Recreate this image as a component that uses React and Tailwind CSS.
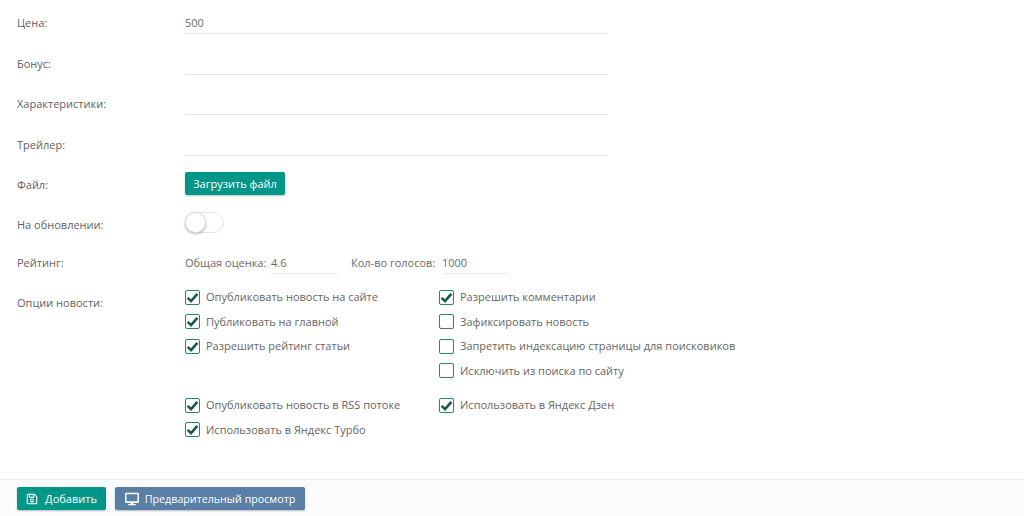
import React from 'react';
import { FaRegSave, FaDesktop } from 'react-icons/fa';

const Row = ({ label, className = '', labelClass = '', children }) => (
  <div className={`flex ${className}`}>
    <div className={`w-[168px] shrink-0 text-[#5f5f5f] ${labelClass}`}>{label}</div>
    <div className="flex-1">{children}</div>
  </div>
);

const Line = ({ value }) => (
  <div className="w-[423px] h-[21px] border-b border-[#e3e6e8] text-[#6b6b6b] leading-[19px]">{value}</div>
);

const Box = ({ label, checked }) => (
  <div className="flex items-center h-[24.5px]">
    <span className="w-[15px] h-[15px] rounded-[2px] border-[1.5px] border-[#2c8074] flex items-center justify-center shrink-0">
      {checked && (
        <svg viewBox="0 0 16 16" className="w-[13px] h-[13px]">
          <path d="M2 8.5 6.2 12.5 14 3.5" fill="none" stroke="#175a50" strokeWidth="3.2" />
        </svg>
      )}
    </span>
    <span className="ml-[6px] text-[#666] whitespace-nowrap">{label}</span>
  </div>
);

const col1a = [['Опубликовать новость на сайте', true], ['Публиковать на главной', true], ['Разрешить рейтинг статьи', true]];
const col2a = [['Разрешить комментарии', true], ['Зафиксировать новость', false], ['Запретить индексацию страницы для поисковиков', false], ['Исключить из поиска по сайту', false]];
const col1b = [['Опубликовать новость в RSS потоке', true], ['Использовать в Яндекс Турбо', true]];
const col2b = [['Использовать в Яндекс Дзен', true]];

const App = () => {
  return (
    <div className="w-[1024px] h-[516px] bg-white flex flex-col overflow-hidden font-['Open_Sans',sans-serif] text-[11px] leading-[20px]">
      <div className="flex-1 pl-[17px] pt-[13px]">
        <Row label="Цена:"><Line value="500" /></Row>
        <Row label="Бонус:" className="mt-[19.5px]"><Line /></Row>
        <Row label="Характеристики:" className="mt-[19.5px]"><Line /></Row>
        <Row label="Трейлер:" className="mt-[19.5px]"><Line /></Row>
        <Row label="Файл:" className="mt-[16.5px] items-center" labelClass="pt-[2px]">
          <button className="h-[23px] w-[100px] bg-[#009688] text-white rounded-[2px] shadow-[0_1px_2px_rgba(0,0,0,0.25)]">Загрузить файл</button>
        </Row>
        <Row label="На обновлении:" className="mt-[17px]" labelClass="h-[21px] pt-[3px]">
          <div className="relative w-[39px] h-[21px] rounded-full border border-[#e6e6e6] bg-white">
            <span className="absolute left-[-1px] top-[-1px] w-[21px] h-[21px] rounded-full bg-white border border-[#ddd] shadow-[0_1px_3px_rgba(0,0,0,0.3)]" />
          </div>
        </Row>
        <Row label="Рейтинг:" className="mt-[20px]">
          <div className="flex text-[#6b6b6b]">
            <span className="w-[82px] whitespace-nowrap">Общая оценка:</span>
            <span className="ml-[4px] w-[67px] h-[21px] border-b border-[#e8eaec]">4.6</span>
            <span className="ml-[13px] w-[87px] whitespace-nowrap">Кол-во голосов:</span>
            <span className="ml-[4px] w-[67px] h-[21px] border-b border-[#e8eaec]">1000</span>
          </div>
        </Row>
        <Row label="Опции новости:" className="mt-[11px]" labelClass="pt-[8px]">
          <div className="flex">
            <div className="w-[254px]">
              {col1a.map(([l, c]) => <Box key={l} label={l} checked={c} />)}
            </div>
            <div>
              {col2a.map(([l, c]) => <Box key={l} label={l} checked={c} />)}
            </div>
          </div>
          <div className="flex mt-[10px]">
            <div className="w-[254px]">
              {col1b.map(([l, c]) => <Box key={l} label={l} checked={c} />)}
            </div>
            <div>
              {col2b.map(([l, c]) => <Box key={l} label={l} checked={c} />)}
            </div>
          </div>
        </Row>
      </div>
      <div className="h-[37px] shrink-0 border-t border-[#e9edf0] bg-[#f9fbfc] flex items-center gap-[9px] pl-[17px] pt-[1px]">
        <button className="h-[23px] w-[89px] bg-[#009688] text-white rounded-[2px] shadow-[0_1px_2px_rgba(0,0,0,0.25)] flex items-center justify-center gap-[7px]">
          <FaRegSave className="w-[12px] h-[12px]" />
          Добавить
        </button>
        <button className="h-[23px] w-[190px] bg-[#5a7fa6] text-white text-[10.7px] rounded-[2px] shadow-[0_1px_2px_rgba(0,0,0,0.25)] flex items-center justify-center gap-[6px]">
          <FaDesktop className="w-[14px] h-[14px]" />
          Предварительный просмотр
        </button>
      </div>
    </div>
  );
};

export default App;
